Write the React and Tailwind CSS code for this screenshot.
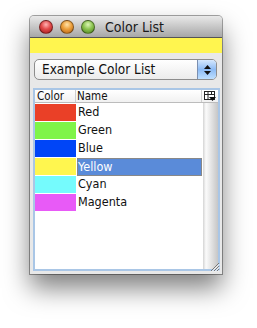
import React from "react";

const rows = [
  { name: "Red", color: "bg-[#ea4027]" },
  { name: "Green", color: "bg-[#7ff448]" },
  { name: "Blue", color: "bg-[#0045f7]" },
  { name: "Yellow", color: "bg-[#fff64f]", selected: true },
  { name: "Cyan", color: "bg-[#75fbfd]" },
  { name: "Magenta", color: "bg-[#e85af7]" },
];

function Light({ cls }) {
  return <div className={`w-[14px] h-[14px] rounded-full border border-black/40 ${cls}`} />;
}

export default function App() {
  return (
    <div className="w-[257px] h-[328px] bg-white pt-[16px] pl-[30px] font-['DejaVu_Sans_Condensed','DejaVu_Sans',sans-serif] text-[#111]">
      <div className="relative w-[192px] h-[258px] flex flex-col rounded-t-[4px] overflow-hidden shadow-[0_14px_26px_rgba(0,0,0,0.5),0_0_0_1px_rgba(0,0,0,0.35)] bg-[#e8e8e8]">
        {/* title bar */}
        <div className="h-[22px] shrink-0 flex items-center pl-[9px] bg-gradient-to-b from-[#e9e9e9] to-[#a7a7a7] border-b border-[#555]">
          <div className="flex gap-[7px]">
            <Light cls="bg-[radial-gradient(circle_at_50%_30%,#ffb3b3_0%,#e24a4a_45%,#9c1616_100%)]" />
            <Light cls="bg-[radial-gradient(circle_at_50%_30%,#ffe2a8_0%,#eda03c_45%,#b05e10_100%)]" />
            <Light cls="bg-[radial-gradient(circle_at_50%_30%,#dcf5b5_0%,#8cc451_45%,#4b7e1a_100%)]" />
          </div>
          <span className="ml-[10px] text-[14px] leading-none text-[#1a1a1a]">Color List</span>
        </div>
        {/* yellow band */}
        <div className="h-[15px] shrink-0 bg-[#fff54f]" />
        {/* popup */}
        <div className="mt-[6px] ml-[4px] w-[183px] h-[21px] shrink-0 flex rounded-[5px] border border-[#8d8d8d] bg-gradient-to-b from-white to-[#ececec] overflow-hidden">
          <div className="flex-1 flex items-center pl-[7px] text-[13.5px] leading-none text-[#111]">Example Color List</div>
          <div className="w-[19px] flex flex-col items-center justify-center gap-[2px] border-l border-[#7b8fb0] bg-gradient-to-b from-[#d6e8fd] via-[#8dbbf4] to-[#bfe0ff]">
            <svg width="7" height="4" viewBox="0 0 7 4"><path d="M3.5 0L7 4H0z" fill="#111" /></svg>
            <svg width="7" height="4" viewBox="0 0 7 4"><path d="M0 0h7L3.5 4z" fill="#111" /></svg>
          </div>
        </div>
        {/* table */}
        <div className="mt-[8px] ml-[3px] w-[187px] flex-1 mb-[3px] border-[2px] border-[#a9c6e6] bg-white flex flex-col">
          <div className="h-[13px] shrink-0 flex border-b border-[#bcbcbc] bg-gradient-to-b from-white to-[#f1f1f1] text-[11.5px] leading-[13px]">
            <div className="w-[41px] pl-[2px] border-r border-[#cfcfcf]">Color</div>
            <div className="w-[126px] pl-[1px] border-r border-[#cfcfcf]">Name</div>
            <div className="flex-1 flex items-center justify-center">
              <svg width="12" height="11" viewBox="0 0 12 11">
                <rect x="0.5" y="0.5" width="10" height="8" fill="white" stroke="#222" />
                <path d="M0.5 3.5h10M4 0.5v8M7.5 0.5v3" stroke="#222" fill="none" />
                <path d="M5 6h7l-3.5 4z" fill="#111" />
              </svg>
            </div>
          </div>
          <div className="flex-1 flex">
            <div className="w-[168px] pt-[1px]">
              {rows.map((r) => (
                <div key={r.name} className="h-[18px] flex">
                  <div className={`w-[41px] h-[17px] ${r.color}`} />
                  <div
                    className={`ml-[1px] w-[125px] h-[18px] text-[12.5px] leading-[16px] ${
                      r.selected ? "bg-[#5a8bd9] text-white border border-[#888]" : "pl-[1px]"
                    }`}
                  >
                    {r.name}
                  </div>
                </div>
              ))}
            </div>
            <div className="flex-1 bg-gradient-to-r from-[#d4d4d4] via-[#fbfbfb] via-20% to-[#c6c6c6]" />
          </div>
        </div>
        {/* resize grip */}
        <svg className="absolute right-[2px] bottom-[2px]" width="11" height="11" viewBox="0 0 11 11">
          <path d="M10 2L2 10M10 5L5 10M10 8L8 10" stroke="#777" strokeWidth="1" />
          <path d="M10.5 3L3 10.5M10.5 6L6 10.5M10.5 9L9 10.5" stroke="#fff" strokeWidth="1" />
        </svg>
      </div>
    </div>
  );
}
